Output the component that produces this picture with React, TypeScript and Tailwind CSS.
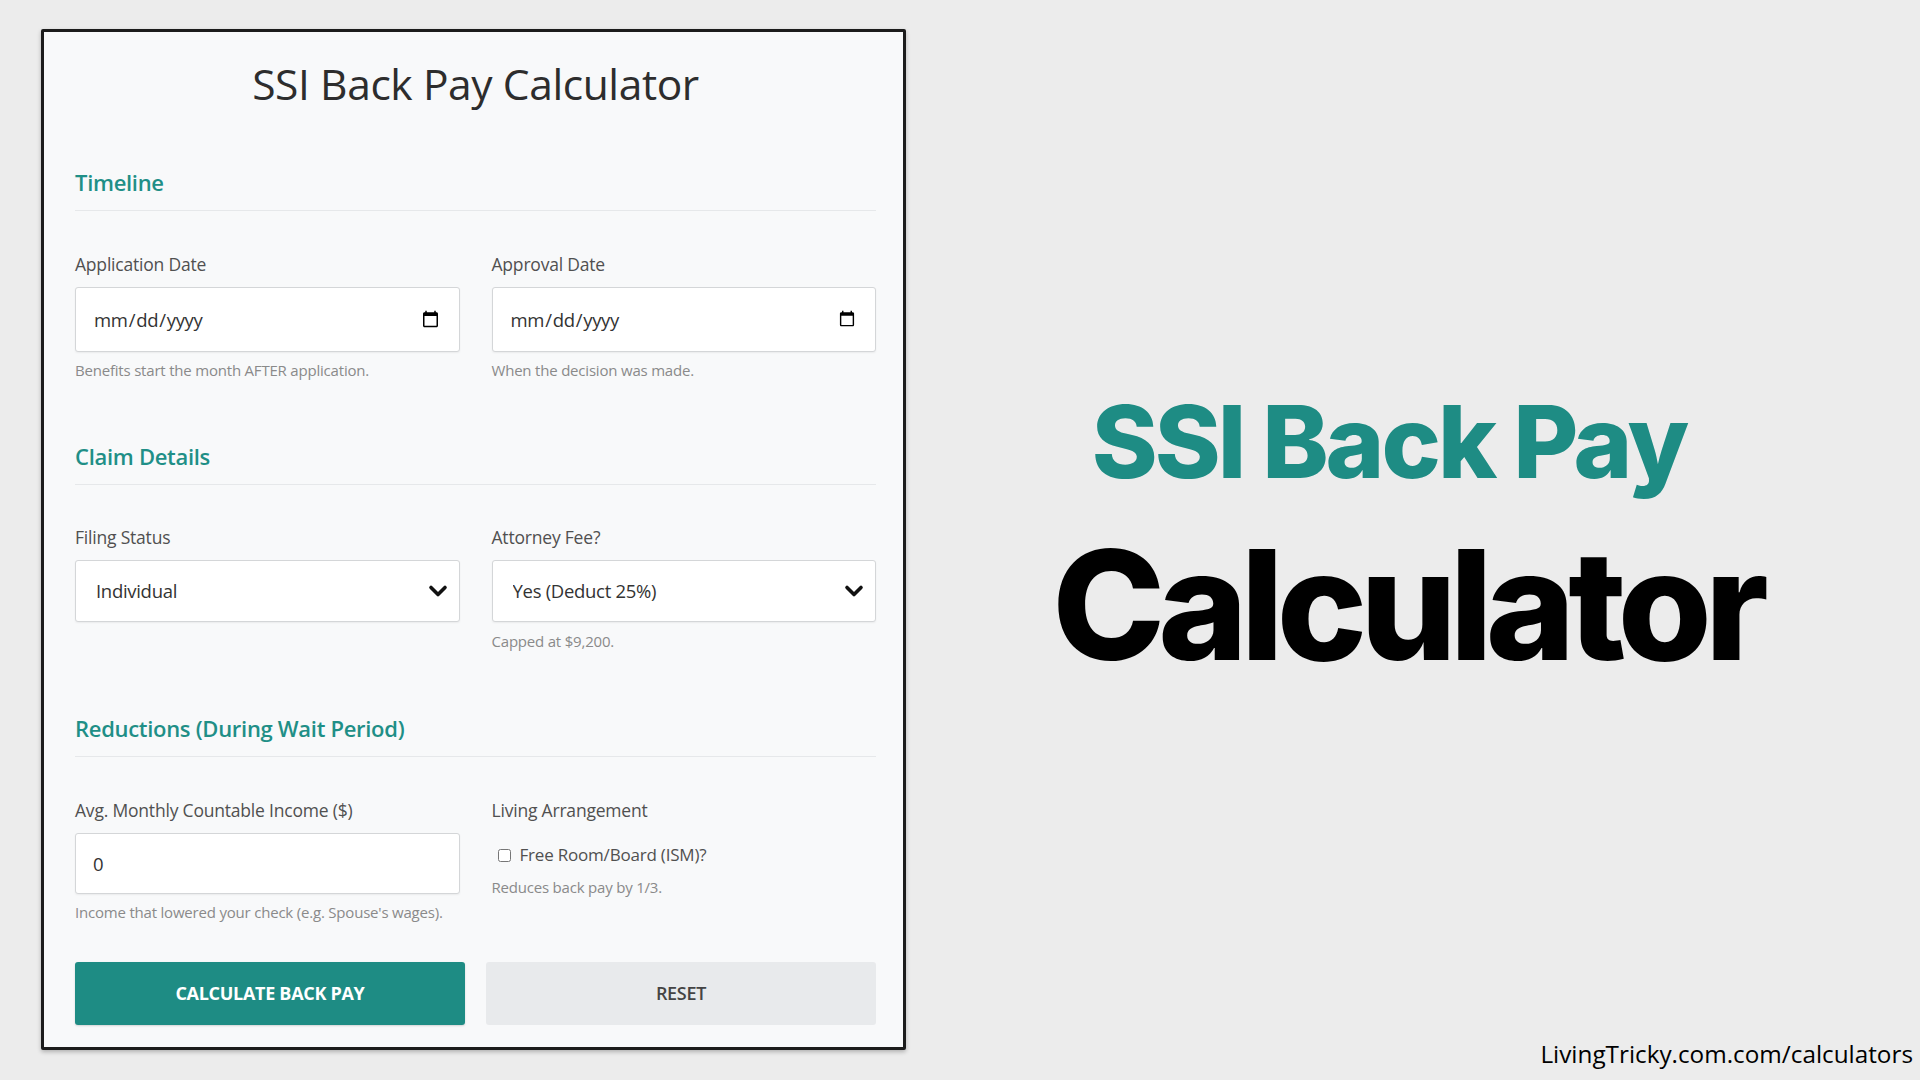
import React from 'react';

function SectionHeader({ title }: { title: string }) {
  return (
    <div className="border-b border-[#e6e8ea] pb-[14px]">
      <h2 className="text-[22px] leading-[28px] font-semibold text-[#1f8f87] tracking-[-0.3px]">{title}</h2>
    </div>
  );
}

function Label({ children }: { children: React.ReactNode }) {
  return <label className="block text-[17.5px] leading-[22px] text-[#505050] mb-[12px] tracking-[-0.2px]">{children}</label>;
}

function Help({ children, className = 'mt-[9px]' }: { children: React.ReactNode; className?: string }) {
  return <p className={`${className} text-[15px] leading-[18px] text-[#8a8a8a] tracking-[-0.2px]`}>{children}</p>;
}

function Chevron() {
  return (
    <svg className="pointer-events-none absolute right-[12px] top-1/2 -translate-y-1/2" width="20" height="13" viewBox="0 0 20 13" fill="none">
      <path d="M3 3 L10 10 L17 3" stroke="#111" strokeWidth="3.6" strokeLinecap="round" strokeLinejoin="round" />
    </svg>
  );
}

function SelectBox({ value, options }: { value: string; options: string[] }) {
  return (
    <div className="relative">
      <select
        defaultValue={value}
        className="w-full h-[62px] appearance-none bg-white border border-[#d4d6d8] rounded-[3px] shadow-[0_1px_2px_rgba(0,0,0,0.06)] pl-[20px] pr-[40px] text-[18.5px] text-[#333] outline-none tracking-[-0.3px]"
      >
        {options.map((o) => (
          <option key={o}>{o}</option>
        ))}
      </select>
      <Chevron />
    </div>
  );
}

export default function App() {
  const inputCls =
    'w-full bg-white border border-[#d4d6d8] rounded-[3px] shadow-[0_1px_2px_rgba(0,0,0,0.06)] px-[17px] text-[18.5px] text-[#333] outline-none tracking-[-0.3px]';

  return (
    <div
      className="w-[1920px] h-[1080px] bg-[#ececec] flex overflow-hidden"
      style={{ fontFamily: '"Open Sans", "Noto Sans", sans-serif' }}
    >
      {/* form card */}
      <div className="pl-[41px] pt-[29px]">
        <div className="w-[865px] h-[1021px] bg-[#f8f9fa] border-[3px] border-[#1c1c1c] rounded-[2px] shadow-[0_2px_4px_rgba(0,0,0,0.25)] pl-[31px] pr-[27px] pt-[26px]">
          <h1 className="text-center text-[42.5px] leading-[52px] text-[#2d2d2d] font-medium tracking-[-0.4px]">SSI Back Pay Calculator</h1>

          <div className="mt-[58px]">
            <SectionHeader title="Timeline" />
            <div className="grid grid-cols-2 gap-x-[32px] mt-[42px]">
              <div>
                <Label>Application Date</Label>
                <input type="date" className={`${inputCls} h-[65px]`} />
                <Help>Benefits start the month AFTER application.</Help>
              </div>
              <div>
                <Label>Approval Date</Label>
                <input type="date" className={`${inputCls} h-[65px]`} />
                <Help>When the decision was made.</Help>
              </div>
            </div>
          </div>

          <div className="mt-[63px]">
            <SectionHeader title="Claim Details" />
            <div className="grid grid-cols-2 gap-x-[32px] mt-[41px]">
              <div>
                <Label>Filing Status</Label>
                <SelectBox value="Individual" options={['Individual', 'Couple']} />
              </div>
              <div>
                <Label>Attorney Fee?</Label>
                <SelectBox value="Yes (Deduct 25%)" options={['Yes (Deduct 25%)', 'No']} />
                <Help className="mt-[10px]">Capped at $9,200.</Help>
              </div>
            </div>
          </div>

          <div className="mt-[64px]">
            <SectionHeader title="Reductions (During Wait Period)" />
            <div className="grid grid-cols-2 gap-x-[32px] mt-[42px]">
              <div>
                <Label>Avg. Monthly Countable Income ($)</Label>
                <input type="number" defaultValue={0} className={`${inputCls} h-[61px]`} />
                <Help>Income that lowered your check (e.g. Spouse's wages).</Help>
              </div>
              <div>
                <Label>Living Arrangement</Label>
                <label className="flex items-center gap-[9px] mt-[22px] pl-[6px] text-[17px] leading-[24px] text-[#505050] tracking-[-0.2px]">
                  <input type="checkbox" className="w-[13px] h-[13px]" />
                  Free Room/Board (ISM)?
                </label>
                <Help className="mt-[11px]">Reduces back pay by 1/3.</Help>
              </div>
            </div>
          </div>

          <div className="grid grid-cols-2 gap-x-[21px] mt-[41px]">
            <button className="h-[63px] bg-[#1e8c84] rounded-[3px] text-white text-[18px] font-bold uppercase tracking-[-0.3px] shadow-[0_1px_2px_rgba(0,0,0,0.15)]">
              Calculate Back Pay
            </button>
            <button className="h-[63px] bg-[#e8eaec] rounded-[3px] text-[#444] text-[18px] font-semibold uppercase tracking-[-0.3px]">
              Reset
            </button>
          </div>
        </div>
      </div>

      {/* right side title */}
      <div className="flex-1 flex flex-col">
        <div className="flex-1 flex flex-col items-center justify-center pt-[36px] pr-[12px]">
          <div
            className="mr-[36px] text-[100px] leading-[110px] font-extrabold text-[#1e8c84] tracking-[-3px]"
            style={{ fontFamily: 'Inter, sans-serif' }}
          >
            SSI Back Pay
          </div>
          <div
            className="text-[152px] leading-[160px] font-extrabold text-black tracking-[-7px] mt-[28px]"
            style={{ fontFamily: 'Inter, sans-serif' }}
          >
            Calculator
          </div>
        </div>
        <div className="self-end pr-[7px] pb-[8px] text-[24.3px] text-black">LivingTricky.com.com/calculators</div>
      </div>
    </div>
  );
}
